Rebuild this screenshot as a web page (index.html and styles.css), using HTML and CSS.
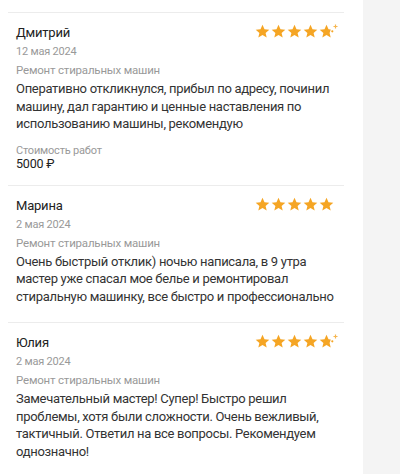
FILE: index.html
```html
<!DOCTYPE html>
<html lang="ru">
<head>
    <meta charset="UTF-8">
    <meta name="viewport" content="width=device-width, initial-scale=1.0">
    <title>Отзывы</title>
    <link rel="stylesheet" href="styles.css">
</head>
<body>

    <svg width="0" height="0" class="defs">
        <defs>
            <path id="star" d="M7.5 0.8 L9.5 5.3 L14.3 5.7 L10.6 8.9 L11.7 13.6 L7.5 11.1 L3.3 13.6 L4.4 8.9 L0.7 5.7 L5.5 5.3 Z"/>
        </defs>
    </svg>

    <div class="page">
        <div class="reviews">

            <!-- Review 1 -->
            <div class="review">
                <div class="review-head">
                    <div class="review-name">Дмитрий</div>
                    <div class="stars">
                        <svg class="star" viewBox="0 0 15 15"><use href="#star"/></svg>
                        <svg class="star" viewBox="0 0 15 15"><use href="#star"/></svg>
                        <svg class="star" viewBox="0 0 15 15"><use href="#star"/></svg>
                        <svg class="star" viewBox="0 0 15 15"><use href="#star"/></svg>
                        <svg class="star star-part" viewBox="0 0 20 15">
                            <path d="M7.5 0.8 L9.5 5.3 L11.8 5.5 L10.6 8.9 L11.7 13.6 L7.5 11.1 L3.3 13.6 L4.4 8.9 L0.7 5.7 L5.5 5.3 Z"/>
                            <path class="spark" d="M16.5 0.5 V4.5 M14.5 2.5 H18.5"/>
                            <circle cx="13.3" cy="7.3" r="1.1"/>
                        </svg>
                    </div>
                </div>
                <div class="review-date">12 мая 2024</div>
                <div class="review-service">Ремонт стиральных машин</div>
                <p class="review-text">Оперативно откликнулся, прибыл по адресу, починил машину, дал гарантию и ценные наставления по использованию машины, рекомендую</p>
                <div class="review-cost">
                    <div class="cost-label">Стоимость работ</div>
                    <div class="cost-value">5000 ₽</div>
                </div>
            </div>

            <!-- Review 2 -->
            <div class="review">
                <div class="review-head">
                    <div class="review-name">Марина</div>
                    <div class="stars">
                        <svg class="star" viewBox="0 0 15 15"><use href="#star"/></svg>
                        <svg class="star" viewBox="0 0 15 15"><use href="#star"/></svg>
                        <svg class="star" viewBox="0 0 15 15"><use href="#star"/></svg>
                        <svg class="star" viewBox="0 0 15 15"><use href="#star"/></svg>
                        <svg class="star" viewBox="0 0 15 15"><use href="#star"/></svg>
                    </div>
                </div>
                <div class="review-date">2 мая 2024</div>
                <div class="review-service">Ремонт стиральных машин</div>
                <p class="review-text">Очень быстрый отклик) ночью написала, в 9 утра мастер уже спасал мое белье и ремонтировал стиральную машинку, все быстро и профессионально</p>
            </div>

            <!-- Review 3 -->
            <div class="review">
                <div class="review-head">
                    <div class="review-name">Юлия</div>
                    <div class="stars">
                        <svg class="star" viewBox="0 0 15 15"><use href="#star"/></svg>
                        <svg class="star" viewBox="0 0 15 15"><use href="#star"/></svg>
                        <svg class="star" viewBox="0 0 15 15"><use href="#star"/></svg>
                        <svg class="star" viewBox="0 0 15 15"><use href="#star"/></svg>
                        <svg class="star star-part" viewBox="0 0 20 15">
                            <path d="M7.5 0.8 L9.5 5.3 L11.8 5.5 L10.6 8.9 L11.7 13.6 L7.5 11.1 L3.3 13.6 L4.4 8.9 L0.7 5.7 L5.5 5.3 Z"/>
                            <path class="spark" d="M16.5 0.5 V4.5 M14.5 2.5 H18.5"/>
                            <circle cx="13.3" cy="7.3" r="1.1"/>
                        </svg>
                    </div>
                </div>
                <div class="review-date">2 мая 2024</div>
                <div class="review-service">Ремонт стиральных машин</div>
                <p class="review-text">Замечательный мастер! Супер! Быстро решил проблемы, хотя были сложности. Очень вежливый, тактичный. Ответил на все вопросы. Рекомендуем однозначно!</p>
            </div>

        </div>
        <div class="side"></div>
    </div>

</body>
</html>
```

FILE: styles.css
```css
/* Reset */
* {
    margin: 0;
    padding: 0;
    box-sizing: border-box;
}

body {
    font-family: Roboto, "Noto Sans", Arial, sans-serif;
    background-color: #fff;
    color: #333;
    letter-spacing: -0.2px;
    overflow: hidden;
}

.defs {
    position: absolute;
}

.page {
    display: flex;
    min-height: 474px;
}

/* Review list */
.reviews {
    width: 363px;
    padding: 12px 19px 0 8px;
    background: #fff;
}

.side {
    flex: 1;
    background: #f4f4f4;
}

.review {
    border-top: 1px solid #ececec;
    padding: 10px 10px 17px 8px;
}

.review-head {
    display: flex;
    justify-content: space-between;
    align-items: center;
}

.review-name {
    font-size: 13px;
    line-height: 20px;
    color: #222;
}

.stars {
    display: flex;
    gap: 1px;
    margin-top: -3px;
}

.star {
    width: 15px;
    height: 15px;
    fill: #f5a524;
}

.star-part {
    width: 20px;
    margin-right: -5px;
}

.star-part .spark {
    stroke: #f5a524;
    stroke-width: 1.2;
    opacity: 0.8;
}

.review-date {
    font-size: 11px;
    line-height: 18px;
    color: #999;
}

.review-service {
    font-size: 11.5px;
    line-height: 18px;
    color: #999;
    margin-bottom: 1px;
}

.review-text {
    font-size: 13px;
    line-height: 17.5px;
    color: #333;
    letter-spacing: -0.3px;
    margin-right: -4px;
}

.review-cost {
    margin-top: 11px;
    margin-bottom: -3px;
}

.cost-label {
    font-size: 11px;
    line-height: 13px;
    color: #999;
}

.cost-value {
    font-size: 12.5px;
    line-height: 14px;
    color: #222;
}
```
